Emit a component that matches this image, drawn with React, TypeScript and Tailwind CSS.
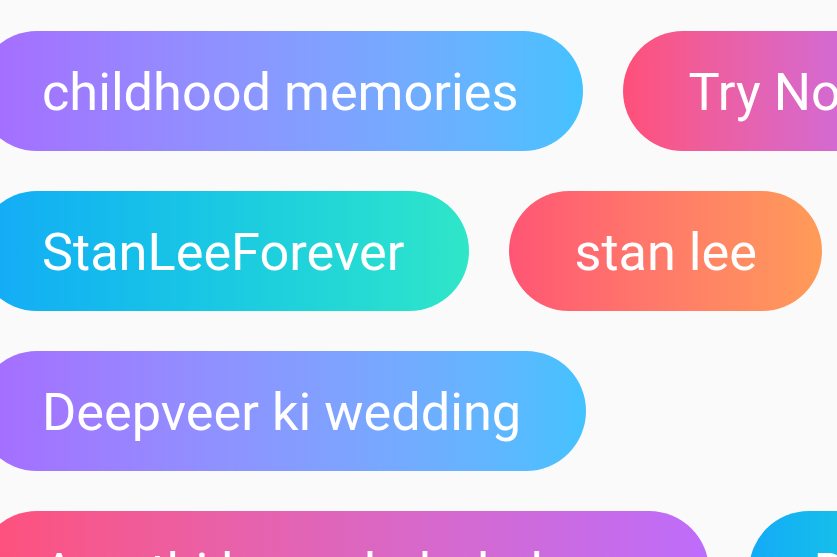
const rows = [
  {
    tags: [
      { label: "childhood memories", bg: "bg-linear-to-r from-[#a66bff] to-[#43c2ff]" },
      { label: "Try Now", bg: "bg-linear-to-r from-[#ff4f79] to-[#bd6cfb]" },
    ],
  },
  {
    tags: [
      { label: "StanLeeForever", bg: "bg-linear-to-r from-[#15aaf7] to-[#2fe6c8]" },
      { label: "stan lee", bg: "bg-linear-to-r from-[#ff5574] to-[#ff9b58]" },
    ],
  },
  {
    tags: [{ label: "Deepveer ki wedding", bg: "bg-linear-to-r from-[#a66bff] to-[#43c2ff]" }],
  },
  {
    tags: [
      { label: "Amethi ka mukabala kaun", bg: "bg-linear-to-r from-[#ff4f79] to-[#bd6cfb]" },
      { label: "Diwali", bg: "bg-linear-to-r from-[#15aaf7] to-[#2fe6c8]" },
    ],
  },
];

function Tag({ label, bg }: { label: string; bg: string }) {
  return (
    <div
      className={`shrink-0 h-[120px] rounded-full px-[65px] flex items-center pt-[3px] text-white text-[52.3px] whitespace-nowrap ${bg}`}
    >
      {label}
    </div>
  );
}

export default function App() {
  return (
    <div
      className="w-[837px] h-[557px] overflow-hidden bg-[#fafafa] pt-[31px] flex flex-col gap-10"
      style={{ fontFamily: "Roboto, 'Liberation Sans', sans-serif" }}
    >
      {rows.map((row, i) => (
        <div key={i} className="flex gap-10 -ml-[23px]">
          {row.tags.map((t) => (
            <Tag key={t.label} label={t.label} bg={t.bg} />
          ))}
        </div>
      ))}
    </div>
  );
}
